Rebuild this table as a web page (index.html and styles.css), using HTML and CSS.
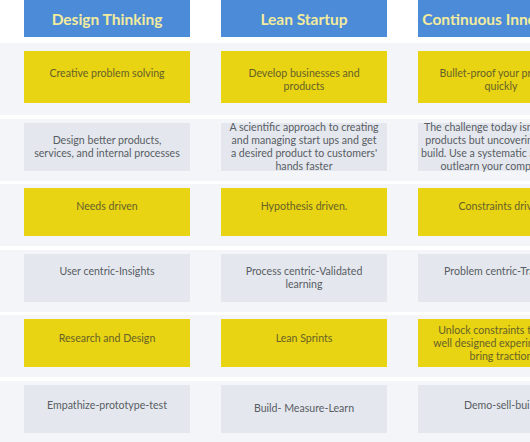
FILE: index.html
```html
<!DOCTYPE html>
<html lang="en">
<head>
<meta charset="utf-8">
<title>Design Thinking vs Lean Startup vs Continuous Innovation</title>
<link rel="stylesheet" href="styles.css">
</head>
<body>
<div class="page">
  <div class="head-row">
    <div class="head">Design Thinking</div>
    <div class="head">Lean Startup</div>
    <div class="head">Continuous Innovation</div>
  </div>

  <div class="band band-first">
    <div class="card yellow top t15">Creative problem solving</div>
    <div class="card yellow top t15">Develop businesses and<br>products</div>
    <div class="card yellow top t15">Bullet-proof your products<br>quickly</div>
  </div>

  <div class="band">
    <div class="card grey mid">Design better products,<br>services, and internal processes</div>
    <div class="card grey mid">A scientific approach to creating<br>and managing start ups and get<br>a desired product to customers'<br>hands faster</div>
    <div class="card grey mid">The challenge today isn't building<br>products but uncovering what to<br>build. Use a systematic approach to<br>outlearn your competition</div>
  </div>

  <div class="band">
    <div class="card yellow top">Needs driven</div>
    <div class="card yellow top">Hypothesis driven.</div>
    <div class="card yellow top">Constraints driven</div>
  </div>

  <div class="band">
    <div class="card grey top">User centric-Insights</div>
    <div class="card grey top">Process centric-Validated<br>learning</div>
    <div class="card grey top">Problem centric-Traction</div>
  </div>

  <div class="band">
    <div class="card yellow top t12">Research and Design</div>
    <div class="card yellow top t12">Lean Sprints</div>
    <div class="card yellow mid">Unlock constraints through<br>well designed experiments to<br>bring traction</div>
  </div>

  <div class="band">
    <div class="card grey top t14">Empathize-prototype-test</div>
    <div class="card grey mid">Build- Measure-Learn</div>
    <div class="card grey top t14">Demo-sell-build</div>
  </div>
</div>
</body>
</html>
```

FILE: styles.css
```css
html, body {
  margin: 0;
  padding: 0;
  background: #ffffff;
  overflow: hidden;
}

body {
  width: 530px;
  height: 442px;
  font-family: "Lato", "Open Sans", sans-serif;
}

.page {
  display: flex;
  flex-direction: column;
  gap: 3.5px;
  width: 640px;
}

.head-row {
  display: grid;
  grid-template-columns: 166px 166px 166px;
  column-gap: 31px;
  padding: 0 0 2.5px 24px;
}

.head {
  height: 37px;
  background: #4b8bd7;
  color: #f2eb9e;
  font-weight: 700;
  font-size: 15.5px;
  display: flex;
  align-items: center;
  justify-content: center;
  white-space: nowrap;
}

.band {
  display: grid;
  grid-template-columns: 166px 166px 166px;
  column-gap: 31px;
  padding: 4px 0 10px 24px;
  background: #f3f5f9;
}

.band-first {
  padding: 8px 0 12px 24px;
}

.band-first .card {
  height: 52px;
}

.card {
  height: 48px;
  box-sizing: border-box;
  display: flex;
  flex-direction: column;
  padding: 0 3px;
  text-align: center;
  font-size: 10.6px;
  line-height: 13px;
  white-space: nowrap;
}

.card.top {
  justify-content: flex-start;
  padding-top: 11.5px;
}

.card.top.t15 {
  padding-top: 15.5px;
}

.card.top.t12 {
  padding-top: 12.5px;
}

.card.top.t14 {
  padding-top: 14.5px;
}

.card.mid {
  justify-content: center;
}

.yellow {
  background: #e8d412;
  color: #676129;
}

.grey {
  background: #e4e7ed;
  color: #585d64;
}
```
